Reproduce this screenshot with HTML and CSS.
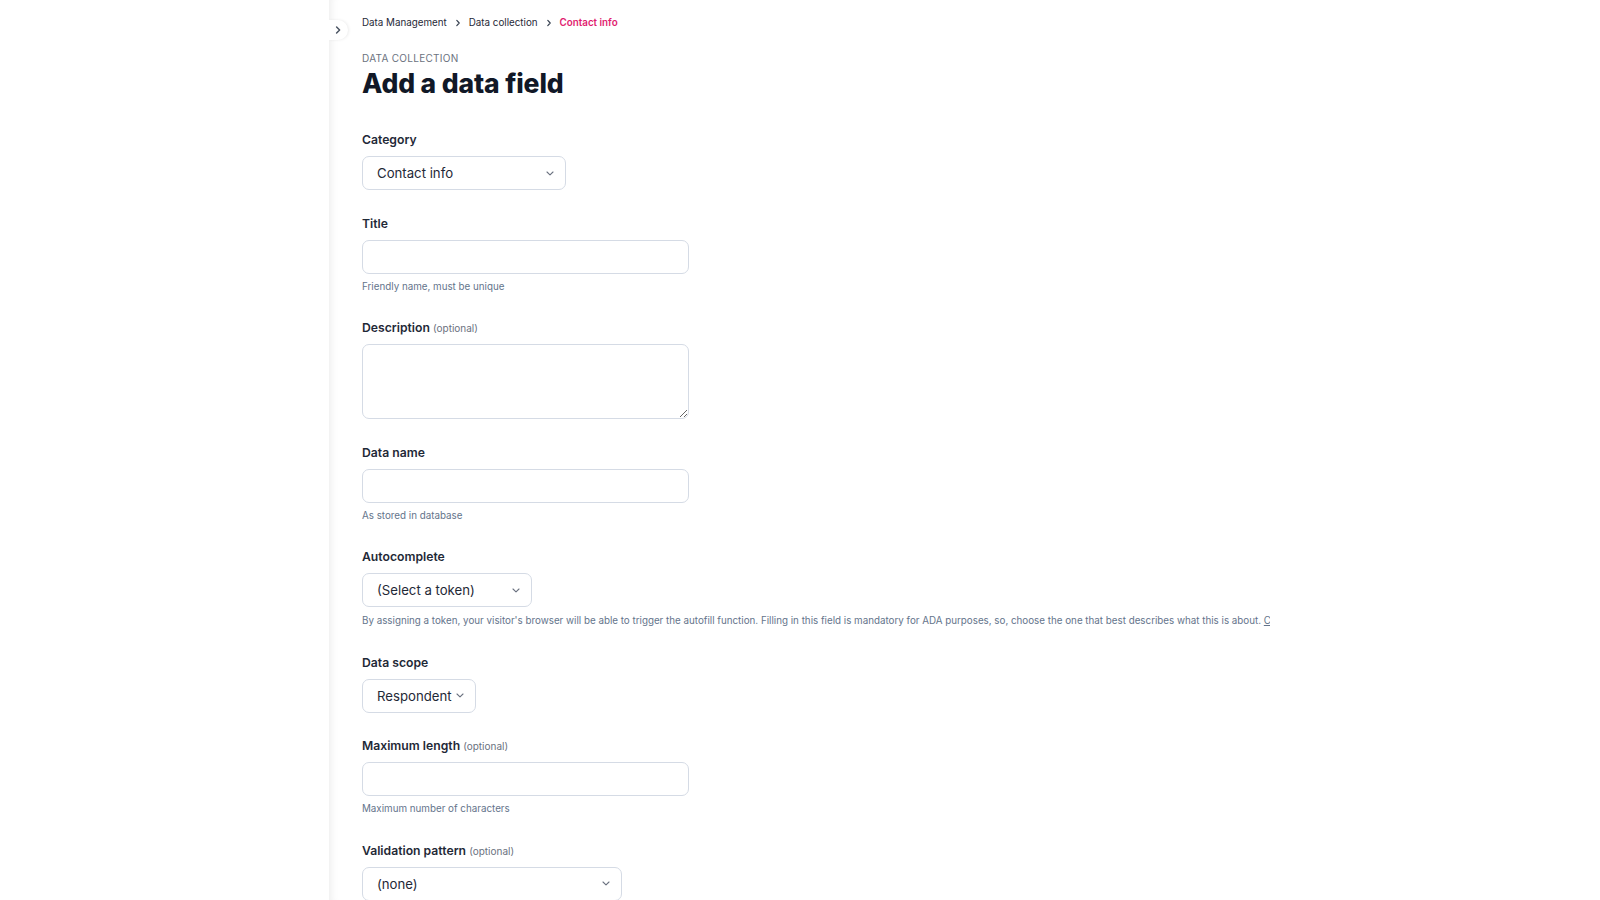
FILE: index.html
```html
<!DOCTYPE html>
<html lang="en">
<head>
<meta charset="utf-8">
<title>Add a data field</title>
<link rel="stylesheet" href="styles.css">
</head>
<body>
<div class="app">
  <aside class="sidebar"></aside>
  <main class="main">
    <button class="toggle" type="button" aria-label="Expand sidebar">
      <svg width="10" height="10" viewBox="0 0 10 10"><path d="M3.6 2 L6.6 5 L3.6 8" fill="none" stroke="#4b5563" stroke-width="1.5" stroke-linecap="round" stroke-linejoin="round"/></svg>
    </button>
    <nav class="crumbs">
      <a class="crumb" href="#">Data Management</a>
      <svg class="crumb-sep" width="8" height="8" viewBox="0 0 8 8"><path d="M2.8 1.4 L5.2 4 L2.8 6.6" fill="none" stroke="#374151" stroke-width="1.2" stroke-linecap="round" stroke-linejoin="round"/></svg>
      <a class="crumb" href="#">Data collection</a>
      <svg class="crumb-sep" width="8" height="8" viewBox="0 0 8 8"><path d="M2.8 1.4 L5.2 4 L2.8 6.6" fill="none" stroke="#374151" stroke-width="1.2" stroke-linecap="round" stroke-linejoin="round"/></svg>
      <span class="crumb crumb-current">Contact info</span>
    </nav>

    <header class="page-head">
      <div class="eyebrow">DATA COLLECTION</div>
      <h1 class="title">Add a data field</h1>
    </header>

    <form class="form">
      <div class="field">
        <label class="label">Category</label>
        <div class="select select-category">
          <span class="select-value">Contact info</span>
          <svg class="chev" width="8" height="5" viewBox="0 0 8 5"><path d="M1 1 L4 3.8 L7 1" fill="none" stroke="#6b7280" stroke-width="1.1" stroke-linecap="round" stroke-linejoin="round"/></svg>
        </div>
      </div>

      <div class="field">
        <label class="label">Title</label>
        <input class="input" type="text">
        <div class="hint">Friendly name, must be unique</div>
      </div>

      <div class="field">
        <label class="label">Description <span class="optional">(optional)</span></label>
        <textarea class="input textarea"></textarea>
      </div>

      <div class="field">
        <label class="label">Data name</label>
        <input class="input" type="text">
        <div class="hint">As stored in database</div>
      </div>

      <div class="field">
        <label class="label">Autocomplete</label>
        <div class="select select-token">
          <span class="select-value">(Select a token)</span>
          <svg class="chev" width="8" height="5" viewBox="0 0 8 5"><path d="M1 1 L4 3.8 L7 1" fill="none" stroke="#6b7280" stroke-width="1.1" stroke-linecap="round" stroke-linejoin="round"/></svg>
        </div>
        <div class="hint hint-long">By assigning a token, your visitor's browser will be able to trigger the autofill function. Filling in this field is mandatory for ADA purposes, so, choose the one that best describes what this is about. <a class="hint-link" href="#">Check the full list of tokens</a></div>
      </div>

      <div class="field">
        <label class="label">Data scope</label>
        <div class="select select-scope">
          <span class="select-value">Respondent</span>
          <svg class="chev" width="8" height="5" viewBox="0 0 8 5"><path d="M1 1 L4 3.8 L7 1" fill="none" stroke="#6b7280" stroke-width="1.1" stroke-linecap="round" stroke-linejoin="round"/></svg>
        </div>
      </div>

      <div class="field">
        <label class="label">Maximum length <span class="optional">(optional)</span></label>
        <input class="input" type="text">
        <div class="hint">Maximum number of characters</div>
      </div>

      <div class="field">
        <label class="label">Validation pattern <span class="optional">(optional)</span></label>
        <div class="select select-pattern">
          <span class="select-value">(none)</span>
          <svg class="chev" width="8" height="5" viewBox="0 0 8 5"><path d="M1 1 L4 3.8 L7 1" fill="none" stroke="#6b7280" stroke-width="1.1" stroke-linecap="round" stroke-linejoin="round"/></svg>
        </div>
      </div>
    </form>
  </main>
</div>
</body>
</html>
```

FILE: styles.css
```css
* { box-sizing: border-box; }

html, body {
  margin: 0;
  padding: 0;
  height: 100%;
  overflow: hidden;
  background: #ffffff;
  font-family: Inter, "Noto Sans", "Liberation Sans", sans-serif;
  color: #1f2937;
}

.app {
  display: flex;
  height: 100vh;
}

.sidebar {
  width: 329px;
  flex: 0 0 329px;
  background: #ffffff;
}

.main {
  position: relative;
  flex: 1;
  padding: 15px 0 0 33px;
  box-shadow: inset 9px 0 10px -8px rgba(0, 0, 0, 0.09);
  overflow: hidden;
}

.toggle {
  position: absolute;
  left: 0;
  top: 20px;
  width: 19px;
  height: 20px;
  padding: 0 2px 0 0;
  border: none;
  border-radius: 0 10px 10px 0;
  background: #ffffff;
  box-shadow: 1px 0 3px rgba(0, 0, 0, 0.08);
  display: flex;
  align-items: center;
  justify-content: center;
  cursor: pointer;
}

.crumbs {
  display: flex;
  align-items: center;
  gap: 7px;
  height: 16px;
  font-size: 9.8px;
  line-height: 16px;
}

.crumb {
  color: #1f2937;
  text-decoration: none;
}

.crumb-current {
  color: #e11d6f;
  font-weight: 600;
}

.crumb-sep { flex: 0 0 auto; }

.page-head {
  margin-top: 20px;
}

.eyebrow {
  font-size: 10px;
  line-height: 14px;
  letter-spacing: 0.03em;
  color: #6b7280;
}

.title {
  margin: 2px 0 0;
  font-size: 26.5px;
  line-height: 32px;
  font-weight: 800;
  color: #111827;
  letter-spacing: -0.005em;
}

.form {
  margin-top: 31px;
  display: flex;
  flex-direction: column;
  gap: 23.5px;
}

.field {
  display: flex;
  flex-direction: column;
  align-items: flex-start;
}

.label {
  font-size: 12.2px;
  line-height: 20px;
  font-weight: 600;
  color: #1f2937;
  margin-bottom: 6px;
}

.optional {
  font-size: 10px;
  font-weight: 400;
  color: #6b7280;
}

.input {
  width: 327px;
  height: 34px;
  border: 1px solid #d5dbe5;
  border-radius: 7px;
  background: #ffffff;
  font: inherit;
  font-size: 13px;
  padding: 0 13px;
  color: #1f2937;
  outline: none;
}

.textarea {
  height: 75px;
  padding: 8px 13px;
  resize: vertical;
  display: block;
}

.select {
  height: 34px;
  border: 1px solid #d5dbe5;
  border-radius: 7px;
  background: #ffffff;
  display: flex;
  align-items: center;
  justify-content: space-between;
  padding: 0 11px 0 14px;
  font-size: 13.2px;
  color: #1f2937;
}

.select-category { width: 204px; }
.select-token { width: 170px; }
.select-scope { width: 114px; }
.select-pattern { width: 260px; }

.chev { flex: 0 0 auto; }

.hint {
  margin-top: 5px;
  font-size: 9.8px;
  line-height: 16px;
  color: #64748b;
}

.hint-long {
  margin-top: 6px;
  width: 908px;
  white-space: nowrap;
  overflow: hidden;
}

.hint-link {
  color: #64748b;
  text-decoration: underline;
}
```
